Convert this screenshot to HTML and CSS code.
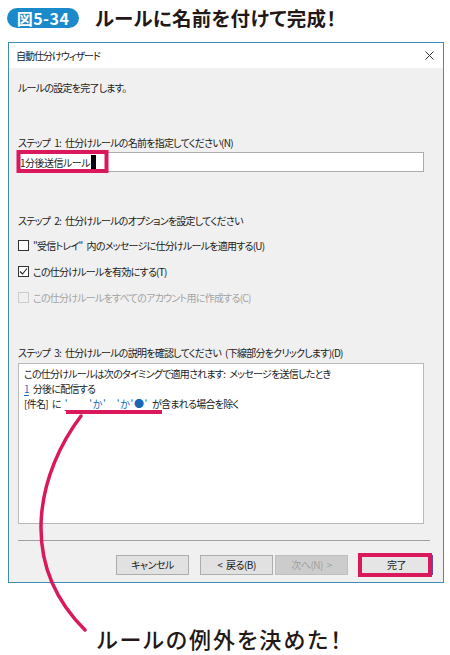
FILE: index.html
```html
<!DOCTYPE html>
<html lang="ja">
<head>
<meta charset="utf-8">
<link rel="stylesheet" href="styles.css">
</head>
<body>
<div class="page">
  <header class="fig-head">
    <span class="badge">図5-34</span>
    <h1 class="fig-title">ルールに名前を付けて完成！</h1>
  </header>

  <section class="dialog">
    <div class="titlebar">
      <span class="titlebar-text">自動仕分けウィザード</span>
      <svg class="close" width="9" height="9" viewBox="0 0 9 9"><path d="M0.5 0.5 L8.5 8.5 M8.5 0.5 L0.5 8.5" stroke="#333" stroke-width="1" fill="none"/></svg>
    </div>
    <div class="dlg-body">
      <p class="label intro">ルールの設定を完了します。</p>

      <p class="label step1">ステップ 1: 仕分けルールの名前を指定してください(N)</p>
      <div class="textbox"><span class="tb-text">1分後送信ルール</span><span class="caret"></span></div>

      <p class="label step2">ステップ 2: 仕分けルールのオプションを設定してください</p>
      <div class="checks">
        <div class="check"><span class="box"></span><span>"受信トレイ" 内のメッセージに仕分けルールを適用する(U)</span></div>
        <div class="check"><span class="box"><svg width="11" height="11" viewBox="0 0 11 11"><path d="M2 5.5 L4.5 8 L9 2.5" stroke="#222" stroke-width="1.1" fill="none"/></svg></span><span>この仕分けルールを有効にする(T)</span></div>
        <div class="check disabled"><span class="box"></span><span>この仕分けルールをすべてのアカウント用に作成する(C)</span></div>
      </div>

      <p class="label step3">ステップ 3: 仕分けルールの説明を確認してください (下線部分をクリックします)(D)</p>
      <div class="desc">
        <p>この仕分けルールは次のタイミングで適用されます: メッセージを送信したとき</p>
        <p><span class="link">1</span> 分後に配信する</p>
        <p>[件名] に <span class="link wide">'　　'か'　'か'●'</span> が含まれる場合を除く</p>
      </div>

      <hr class="sep">

      <div class="buttons">
        <button class="btn">キャンセル</button>
        <button class="btn back">&lt; 戻る(B)</button>
        <button class="btn off">次へ(N) &gt;</button>
        <button class="btn finish">完了</button>
      </div>
    </div>
  </section>

  <p class="note">ルールの例外を決めた！</p>

  <svg class="annot" width="450" height="655" viewBox="0 0 450 655">
    <rect x="18.5" y="152" width="88" height="19" fill="none" stroke="#d9195c" stroke-width="4"/>
    <path d="M66 412 H162" stroke="#d9195c" stroke-width="4" fill="none"/>
    <path d="M81 416 C40 470 15 560 85 630" stroke="#d9195c" stroke-width="3.5" fill="none" stroke-linecap="round"/>
    <rect x="360" y="555" width="70" height="20" fill="none" stroke="#d9195c" stroke-width="4"/>
  </svg>
</div>
</body>
</html>
```

FILE: styles.css
```css
* { box-sizing: border-box; }
html, body { margin: 0; padding: 0; background: #fff; }
body {
  font-family: "Noto Sans CJK JP", "Noto Sans", sans-serif;
  color: #1a1a1a;
  font-feature-settings: "palt";
}
.page { position: relative; width: 450px; height: 655px; overflow: hidden; }

.fig-head {
  display: flex;
  align-items: center;
  padding: 8px 0 0 7px;
  height: 28px;
}
.badge {
  display: inline-flex;
  align-items: center;
  justify-content: center;
  width: 72px;
  height: 20px;
  border-radius: 10px;
  background: #1a8acb;
  color: #fff;
  font-weight: 700;
  font-size: 16px;
  letter-spacing: 0.5px;
}
.fig-title {
  margin: 0 0 0 16px;
  font-size: 19.5px;
  font-weight: 700;
  color: #231815;
  line-height: 20px;
  letter-spacing: 0.3px;
}

.dialog {
  margin: 14px 0 0 8px;
  width: 436px;
  height: 541px;
  border: 1px solid #3f8db6;
  background: #f0f0f0;
  display: flex;
  flex-direction: column;
}
.titlebar {
  height: 25px;
  background: #fff;
  display: flex;
  align-items: center;
  justify-content: space-between;
  padding: 0 9px 0 7px;
}
.titlebar-text { font-size: 10px; color: #222; letter-spacing: -1px; }
.close { display: block; }

.dlg-body {
  flex: 1;
  padding: 13px 10px 5px 8px;
  display: flex;
  flex-direction: column;
  font-size: 10px;
  letter-spacing: -0.75px;
  word-spacing: 2.5px;
}
.label { margin: 0; padding-left: 1px; line-height: 14px; font-size: 10px; }
.step1 { margin-top: 41px; }
.textbox {
  margin-top: 2px;
  width: 407px;
  height: 20px;
  background: #fff;
  border: 1px solid #acacac;
  display: flex;
  align-items: center;
  padding-left: 2px;
  font-size: 10px;
  letter-spacing: -0.5px;
}
.caret { display: inline-block; width: 5px; height: 15px; background: #000; margin-left: 1px; }
.step2 { margin-top: 42px; }
.checks { margin-top: 9px; display: flex; flex-direction: column; gap: 10px; }
.check { display: flex; align-items: center; height: 16px; gap: 4px; padding-left: 1px; }
.box {
  width: 11px; height: 11px;
  border: 1px solid #333;
  background: #fff;
  display: inline-flex;
  align-items: center;
  justify-content: center;
}
.box svg { display: block; margin: -1px; }
.check.disabled { color: #a3a3a3; }
.check.disabled .box { border-color: #cccccc; background: #f0f0f0; }
.step3 { margin-top: 41px; }
.desc {
  margin-top: 3px;
  margin-left: 1px;
  width: 406px;
  height: 161px;
  background: #fff;
  border: 1px solid #b9b9b9;
  padding: 2px 5px;
}
.desc p { margin: 0; line-height: 15px; font-size: 10px; }
.link { color: #1667b8; text-decoration: underline; text-underline-offset: 2px; }
.link.wide { letter-spacing: 0.6px; }

.sep {
  margin: 16px 0 0 1px;
  width: 412px;
  border: 0;
  border-top: 1px solid #a0a0a0;
  height: 0;
}
.buttons {
  margin-top: 14px;
  display: flex;
  justify-content: flex-end;
  padding-right: 0;
}
.btn {
  width: 73px;
  height: 20px;
  background: #e1e1e1;
  border: 1px solid #adadad;
  font-family: inherit;
  font-feature-settings: "palt";
  font-size: 10px;
  letter-spacing: -0.5px;
  word-spacing: 2px;
  color: #1a1a1a;
  padding: 0;
  line-height: 18px;
}
.back { margin-left: 11px; }
.off { margin-left: 2px; background: #cccccc; border-color: #bfbfbf; color: #a0a0a0; }
.finish { margin-left: 12px; background: #e5e5e5; border-color: #5a4fb0; }

.note {
  margin: 42px 0 0 97px;
  font-size: 22px;
  line-height: 26px;
  font-weight: 500;
  color: #231815;
  letter-spacing: 2px;
}

.annot { position: absolute; left: 0; top: 0; pointer-events: none; }
```
